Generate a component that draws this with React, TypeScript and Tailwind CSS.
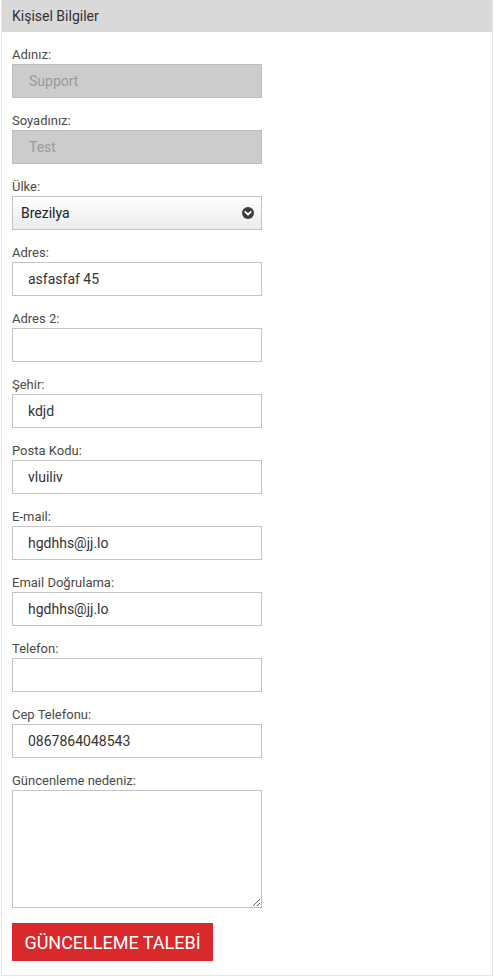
const fields = [
  { label: "Adınız:", value: "Support", disabled: true },
  { label: "Soyadınız:", value: "Test", disabled: true },
  { label: "Ülke:", value: "Brezilya", select: true },
  { label: "Adres:", value: "asfasfaf 45" },
  { label: "Adres 2:", value: "" },
  { label: "Şehir:", value: "kdjd" },
  { label: "Posta Kodu:", value: "vluiliv" },
  { label: "E-mail:", value: "hgdhhs@jj.lo" },
  { label: "Email Doğrulama:", value: "hgdhhs@jj.lo" },
  { label: "Telefon:", value: "" },
  { label: "Cep Telefonu:", value: "0867864048543" },
];

const ChevronCircle = () => (
  <svg width="12" height="12" viewBox="0 0 12 12">
    <circle cx="6" cy="6" r="6" fill="#3d3d3d" />
    <path d="M3.3 4.9 L6 7.6 L8.7 4.9" stroke="#fff" strokeWidth="1.8" fill="none" strokeLinecap="round" strokeLinejoin="round" />
  </svg>
);

export default function App() {
  return (
    <div className="bg-white min-h-[977px] font-['Roboto',sans-serif]">
      <div className="ml-[1px] w-[492px] border border-t-0 border-[#e6e6e6]">
        <div className="h-[32px] bg-[#d9d9d9] flex items-center px-[10px] text-[14px] text-[#333]">
          Kişisel Bilgiler
        </div>
        <div className="pt-[15px] pb-[14px] px-[10px]">
          {fields.map((f) => (
            <div key={f.label} className="mb-[15px]">
              <div className="text-[13px] leading-[16px] text-[#4a4a4a] mb-[1px]">{f.label}</div>
              {f.select ? (
                <div className="w-[250px] h-[34px] border border-[#c4c4c4] bg-gradient-to-b from-white to-[#ececec] flex items-center justify-between pl-[8px] pr-[7px] text-[14px] text-[#222]">
                  <span>{f.value}</span>
                  <ChevronCircle />
                </div>
              ) : (
                <div
                  className={
                    f.disabled
                      ? "w-[250px] h-[34px] border border-[#bdbdbd] bg-[#cccccc] flex items-center pl-[16px] text-[14px] text-[#9a9a9a]"
                      : "w-[250px] h-[34px] border border-[#c4c4c4] bg-white flex items-center pl-[15px] text-[14px] text-[#333]"
                  }
                >
                  {f.value}
                </div>
              )}
            </div>
          ))}
          <div className="mb-[15px]">
            <div className="text-[13px] leading-[16px] text-[#4a4a4a] mb-[1px]">Güncenleme nedeniz:</div>
            <textarea className="block w-[250px] h-[118px] border border-[#c4c4c4] bg-white outline-none" />
          </div>
          <button className="h-[38px] w-[201px] bg-[#d9292b] text-white text-[18px] uppercase flex items-center justify-center">
            Güncelleme Talebİ
          </button>
        </div>
      </div>
    </div>
  );
}
